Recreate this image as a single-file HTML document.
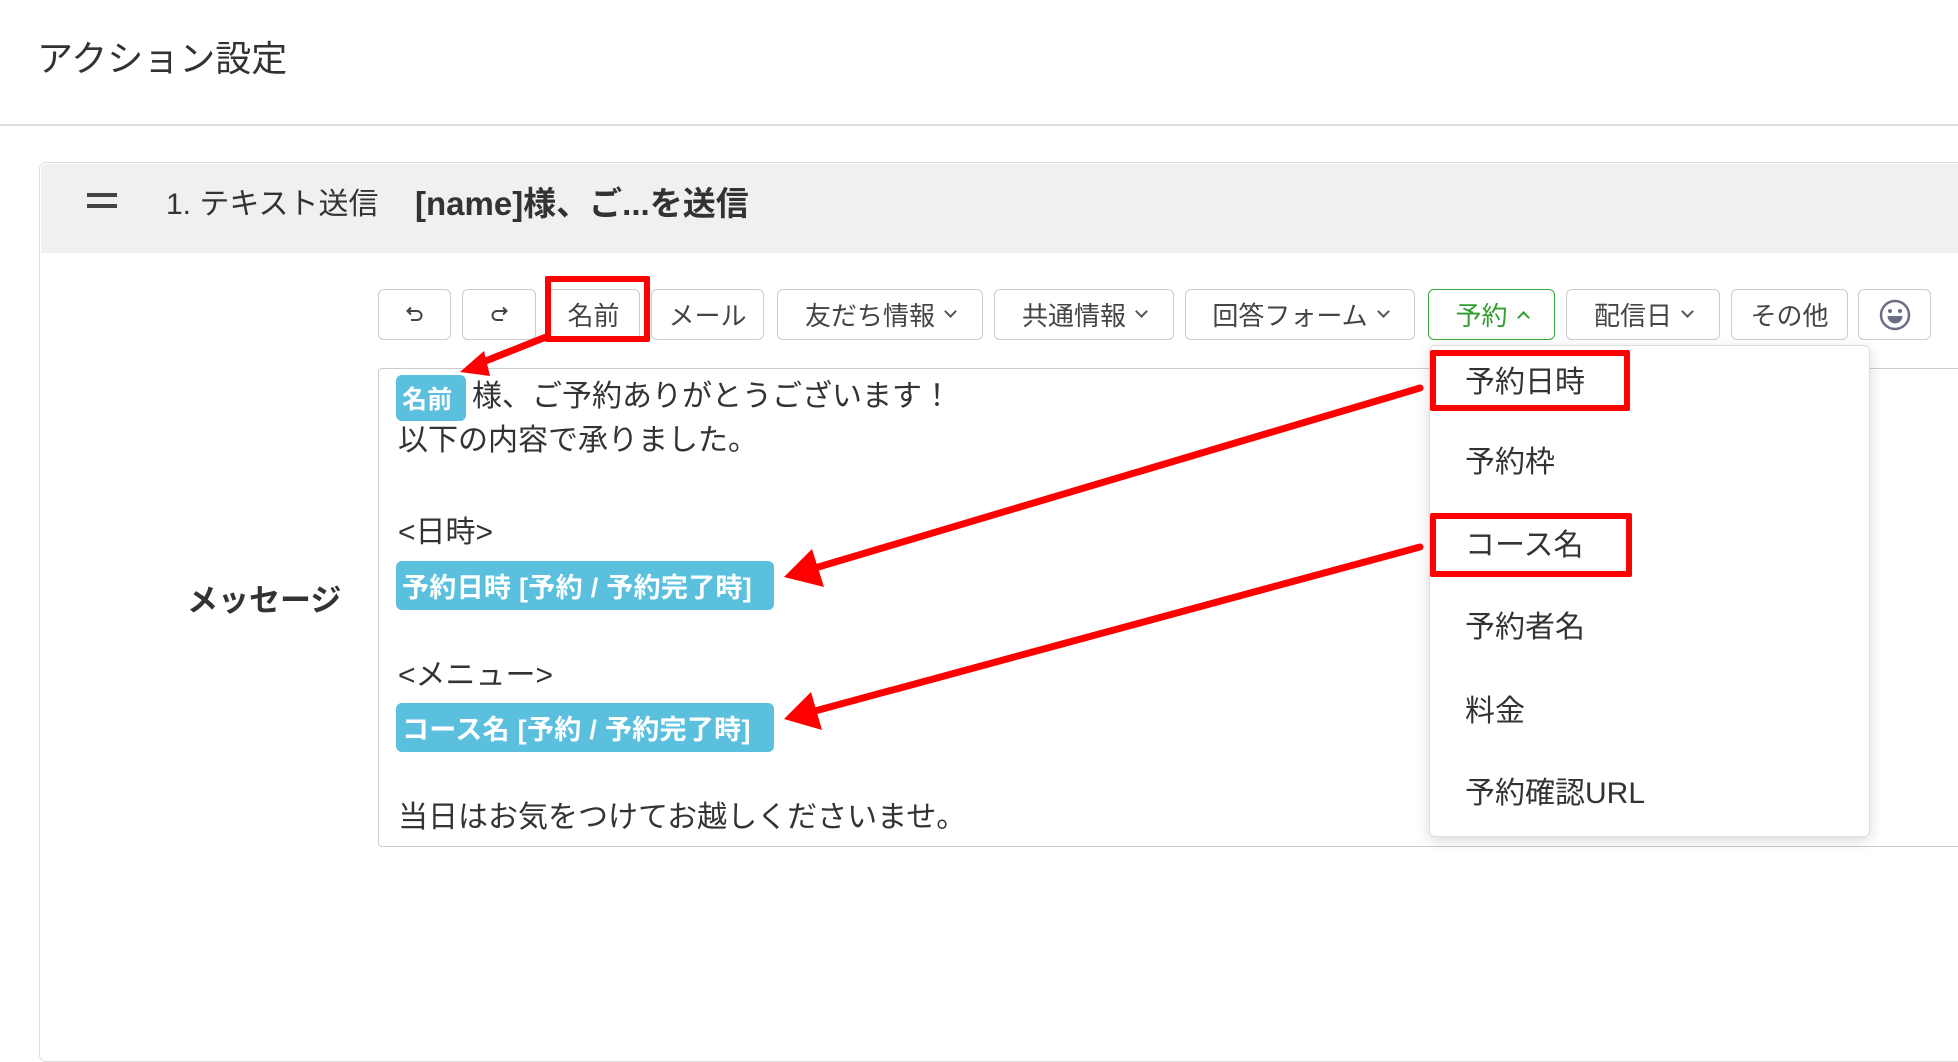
<!DOCTYPE html>
<html><head><meta charset="utf-8">
<style>
*{box-sizing:border-box;margin:0;padding:0}
body{width:1958px;height:890px;overflow:hidden;background:#fff;position:relative;font-family:"Liberation Sans","Noto Sans CJK JP",sans-serif;color:#333}
.a{position:absolute}
.btn{position:absolute;top:289px;height:51px;border:1.5px solid #ccc;border-radius:6px;background:#fff;font-size:26px;color:#444;display:flex;align-items:center;justify-content:center;white-space:nowrap}
.chev{display:inline-block;width:9px;height:9px;border-right:2px solid #555;border-bottom:2px solid #555;transform:rotate(45deg);margin-left:11px;margin-top:-6px}
.line{position:absolute;left:398px;font-size:30px;color:#333;white-space:nowrap;line-height:44px}
.chip{position:absolute;background:#5bc0de;color:#fff;font-weight:bold;border-radius:6px;font-size:27px;display:flex;align-items:center;padding-left:6px;white-space:nowrap;letter-spacing:0.3px}
.item{position:absolute;left:1465px;font-size:30px;color:#333;line-height:40px}
.red{position:absolute;border:6px solid #f00;border-radius:2px}
</style></head><body>
<div class="a" style="left:37px;top:36px;font-size:36px;color:#333;line-height:46px">アクション設定</div>
<div class="a" style="left:0;top:124px;width:1958px;height:2px;background:#ddd"></div>

<div class="a" style="left:39px;top:162px;width:1940px;height:900px;border:1.5px solid #ddd;border-radius:7px"></div>
<div class="a" style="left:40.5px;top:163.5px;width:1920px;height:89px;background:#f0f0f2;border-radius:6px 0 0 0"></div>
<div class="a" style="left:87px;top:193px;width:30px;height:3.5px;background:#444"></div>
<div class="a" style="left:87px;top:204px;width:30px;height:3.5px;background:#444"></div>
<div class="a" style="left:166px;top:184px;font-size:30px;line-height:42px;color:#333;white-space:nowrap">1. テキスト送信</div>
<div class="a" style="left:415px;top:183px;font-size:33px;line-height:42px;color:#333;white-space:nowrap;font-weight:bold">[name]様、ご...を送信</div>

<div class="btn" style="left:378px;width:73px"><svg width="20" height="20" viewBox="0 0 20 20"><path d="M3 6h9a4.5 4.5 0 0 1 0 9H6M6 2.5 2.5 6 6 9.5" fill="none" stroke="#444" stroke-width="2"/></svg></div>
<div class="btn" style="left:462px;width:74px"><svg width="20" height="20" viewBox="0 0 20 20"><path d="M17 6H8a4.5 4.5 0 0 0 0 9h6M14 2.5 17.5 6 14 9.5" fill="none" stroke="#444" stroke-width="2"/></svg></div>
<div class="btn" style="left:547px;width:93px">名前</div>
<div class="btn" style="left:651px;width:113px">メール</div>
<div class="btn" style="left:777px;width:206px">友だち情報<span class="chev"></span></div>
<div class="btn" style="left:994px;width:180px">共通情報<span class="chev"></span></div>
<div class="btn" style="left:1185px;width:230px">回答フォーム<span class="chev"></span></div>
<div class="btn" style="left:1428px;width:127px;border-color:#3aa83a;color:#2f9e2f">予約<span class="chev" style="transform:rotate(225deg);margin-top:6px;border-color:#2f9e2f"></span></div>
<div class="btn" style="left:1566px;width:154px">配信日<span class="chev"></span></div>
<div class="btn" style="left:1731px;width:117px">その他</div>
<div class="btn" style="left:1858px;width:73px"><svg width="34" height="34" viewBox="0 0 34 34"><circle cx="17" cy="17" r="14" fill="none" stroke="#6b6e85" stroke-width="2.5"/><circle cx="12" cy="13" r="2" fill="#6b6e85"/><circle cx="22" cy="13" r="2" fill="#6b6e85"/><path d="M9.5 18h15a7.5 7.5 0 0 1-15 0z" fill="#6b6e85"/></svg></div>
<div class="red" style="left:545px;top:276px;width:105px;height:66px"></div>

<div class="a" style="left:187px;top:575px;font-size:31px;font-weight:bold;color:#333">メッセージ</div>

<div class="a" style="left:378px;top:368px;width:1620px;height:479px;border:1.5px solid #ccc;border-radius:4px"></div>
<div class="chip" style="left:396px;top:375px;width:70px;height:46px;font-size:25px">名前</div>
<div class="line" style="left:472px;top:375px">様、ご予約ありがとうございます！</div>
<div class="line" style="top:419px">以下の内容で承りました。</div>
<div class="line" style="top:511px">&lt;日時&gt;</div>
<div class="chip" style="left:396px;top:561px;width:378px;height:49px">予約日時 [予約 / 予約完了時]</div>
<div class="line" style="top:654px">&lt;メニュー&gt;</div>
<div class="chip" style="left:396px;top:703px;width:378px;height:49px">コース名 [予約 / 予約完了時]</div>
<div class="line" style="top:796px">当日はお気をつけてお越しくださいませ。</div>

<div class="a" style="left:1429px;top:345px;width:441px;height:492px;background:#fff;border:1.5px solid #ddd;border-radius:6px;box-shadow:0 4px 14px rgba(0,0,0,.15)"></div>
<div class="item" style="top:363px">予約日時</div>
<div class="item" style="top:443px">予約枠</div>
<div class="item" style="top:526px">コース名</div>
<div class="item" style="top:608px">予約者名</div>
<div class="item" style="top:692px">料金</div>
<div class="item" style="top:774px">予約確認URL</div>
<div class="red" style="left:1430px;top:350px;width:200px;height:61px"></div>
<div class="red" style="left:1430px;top:513px;width:202px;height:64px"></div>

<svg class="a" style="left:0;top:0" width="1958" height="890">
<g stroke="#f00" stroke-width="7" stroke-linecap="round" fill="#f00">
<line x1="546" y1="337" x2="478" y2="364"/>
<polygon points="460,372 484,351 490,376" stroke="none"/>
<line x1="1420" y1="388" x2="815" y2="568"/>
<polygon points="784,577 812,549 824,587" stroke="none"/>
<line x1="1420" y1="547" x2="815" y2="711"/>
<polygon points="784,719 811,692 822,730" stroke="none"/>
</g></svg>
</body></html>
